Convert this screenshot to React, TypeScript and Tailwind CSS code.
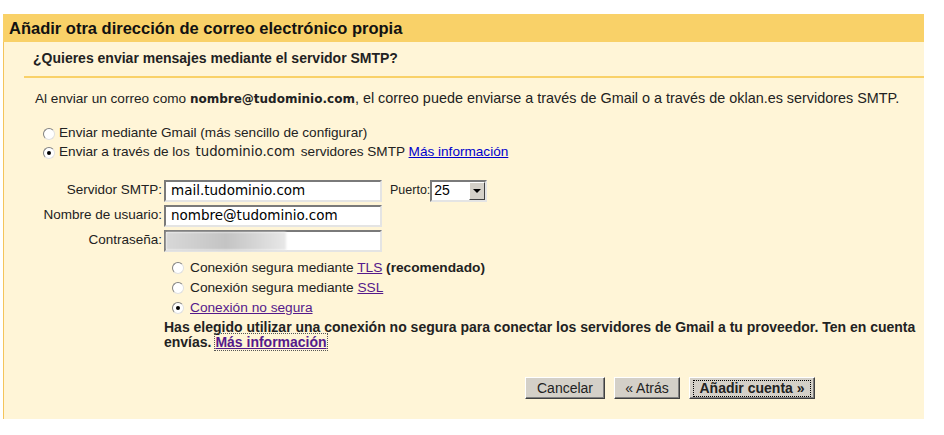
import React from 'react';

const sans = "font-['Liberation_Sans',Arial,sans-serif]";
const dejavu = "font-['DejaVu_Sans',Verdana,sans-serif]";

function Radio({ checked }: { checked?: boolean }) {
  return (
    <span className="inline-flex w-[12px] h-[12px] rounded-full border border-t-[#808080] border-l-[#808080] border-r-[#e0e0e0] border-b-[#e0e0e0] bg-white items-center justify-center shrink-0">
      {checked && <span className="w-[4px] h-[4px] rounded-full bg-black" />}
    </span>
  );
}

function Field({ label, value, blurred }: { label: string; value?: string; blurred?: boolean }) {
  return (
    <div className="flex items-center h-[25px]">
      <span className="w-[158px] text-right pr-[2px] text-[13.5px] text-[#222] whitespace-nowrap">{label}</span>
      <div className={`w-[218px] h-[22px] bg-white border-2 border-t-[#7a7a7a] border-l-[#7a7a7a] border-r-[#e4e4e4] border-b-[#e4e4e4] flex items-center px-[5px] text-[13.5px] text-black ${dejavu}`}>
        {blurred ? (
          <div className="w-[120px] h-[18px] -ml-[5px] bg-gradient-to-r from-[#d8d8d8] via-[#c4c4c4] to-[#e8e8e8] blur-[1px]" />
        ) : (
          value
        )}
      </div>
    </div>
  );
}

function Btn({ children, primary, w }: { children: React.ReactNode; primary?: boolean; w: string }) {
  return (
    <button className={`${w} h-[22px] bg-[#d4d0c8] border border-t-white border-l-white border-r-[#404040] border-b-[#404040] shadow-[inset_-1px_-1px_0_#808080] text-[14px] text-[#222] flex items-center justify-center ${primary ? 'font-bold' : ''}`}>
      {primary ? (
        <span className="border border-dotted border-black px-[5px] leading-[15px] inline-block">{children}</span>
      ) : (
        children
      )}
    </button>
  );
}

export default function App() {
  return (
    <div className={`w-[944px] h-[435px] bg-white pt-[14px] pl-[3px] overflow-hidden ${sans}`}>
      <div className="w-[921px]">
        {/* cabecera */}
        <div className="h-[28px] bg-[#f9d168] flex items-center pl-[6px]">
          <h1 className="text-[16.5px] font-bold text-[#111] whitespace-nowrap">Añadir otra dirección de correo electrónico propia</h1>
        </div>

        <div className="h-[377px] bg-[#fff5d7] border-l border-[#f4c45a] overflow-hidden">
          <div className="ml-[20px] h-[36px] border-b-2 border-[#f9d168] flex items-center pl-[9px] pb-[1px]">
            <h2 className="text-[14px] font-bold text-[#222]">¿Quieres enviar mensajes mediante el servidor SMTP?</h2>
          </div>

          <p className="mt-[13px] ml-[31px] text-[13.6px] leading-[14px] text-[#222] whitespace-nowrap">
            Al enviar un correo como <b className={`${dejavu} text-[12px]`}>nombre@tudominio.com</b>
            <span className="text-[14.4px]">, el correo puede enviarse a través de Gmail o a través de oklan.es servidores SMTP.</span>
          </p>

          <div className="mt-[18px] ml-[39px] text-[13.6px] text-[#222]">
            <div className="flex items-center gap-[4px] h-[19px]">
              <Radio />
              <span>Enviar mediante Gmail (más sencillo de configurar)</span>
            </div>
            <div className="flex items-center gap-[4px] h-[19px]">
              <Radio checked />
              <span className="whitespace-nowrap">
                Enviar a través de los <span className={`${dejavu} text-[13.3px] mx-[2px]`}>tudominio.com</span> servidores SMTP{' '}
                <a href="#" className="text-[#0000cc] underline">Más información</a>
              </span>
            </div>
          </div>

          <div className="mt-[16px] ml-[2px]">
            <div className="flex items-center">
              <Field label="Servidor SMTP:" value="mail.tudominio.com" />
              <span className="ml-[8px] text-[12.5px] text-[#222]">Puerto:</span>
              <div className={`w-[57px] h-[22px] bg-white border-2 border-t-[#7a7a7a] border-l-[#7a7a7a] border-r-[#e4e4e4] border-b-[#e4e4e4] flex items-center justify-between text-[14px] text-black ${sans}`}>
                <span className="pl-[2px]">25</span>
                <span className="w-[16px] h-[18px] bg-[#d4d0c8] border border-t-white border-l-white border-r-[#404040] border-b-[#404040] flex items-center justify-center">
                  <span className="w-0 h-0 border-l-[4px] border-r-[4px] border-t-[4px] border-l-transparent border-r-transparent border-t-black" />
                </span>
              </div>
            </div>
            <Field label="Nombre de usuario:" value="nombre@tudominio.com" />
            <Field label="Contraseña:" blurred />
          </div>

          <div className="mt-[5px] ml-[168px] text-[13.7px] text-[#222]">
            <div className="flex items-center gap-[6px] h-[20px]">
              <Radio />
              <span className="whitespace-nowrap">
                Conexión segura mediante <a href="#" className="text-[#551a8b] underline">TLS</a> <b>(recomendado)</b>
              </span>
            </div>
            <div className="flex items-center gap-[6px] h-[20px]">
              <Radio />
              <span>
                Conexión segura mediante <a href="#" className="text-[#551a8b] underline">SSL</a>
              </span>
            </div>
            <div className="flex items-center gap-[6px] h-[20px]">
              <Radio checked />
              <a href="#" className="text-[#551a8b] underline">Conexión no segura</a>
            </div>
          </div>

          <p className="mt-[2px] ml-[160px] w-[800px] text-[14px] leading-[15px] font-bold text-[#222] whitespace-nowrap">
            Has elegido utilizar una conexión no segura para conectar los servidores de Gmail a tu proveedor. Ten en cuenta
            <br />
            envías.{' '}
            <a href="#" className="text-[#551a8b] underline outline outline-1 outline-dotted outline-[#555]">Más información</a>
          </p>

          <div className="mt-[27px] ml-[521px] flex gap-[9px]">
            <Btn w="w-[80px]">Cancelar</Btn>
            <Btn w="w-[66px]">« Atrás</Btn>
            <Btn w="w-[126px]" primary>Añadir cuenta »</Btn>
          </div>
        </div>
      </div>
    </div>
  );
}
